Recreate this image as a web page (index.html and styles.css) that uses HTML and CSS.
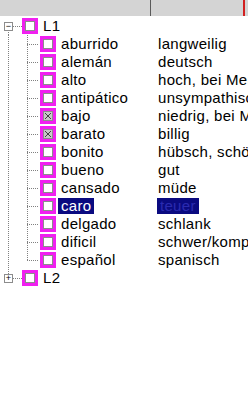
FILE: index.html
```html
<!DOCTYPE html>
<html lang="en">
<head>
    <meta charset="UTF-8">
    <title>Vokabeln</title>
    <link rel="stylesheet" href="styles.css">
</head>
<body>
    <div class="header">
        <div class="head-cell first"></div>
        <div class="head-cell second"></div>
    </div>
    <div class="tree">
        <div class="row">
            <div class="col1">
                <span class="guide root top"><span class="exp">&minus;</span></span>
                <span class="cb"></span>
                <span class="lbl">L1</span>
            </div>
        </div>

        <div class="row">
            <div class="col1"><span class="guide line"></span><span class="guide child"></span><span class="cb"></span><span class="lbl">aburrido</span></div>
            <div class="col2">langweilig</div>
        </div>
        <div class="row">
            <div class="col1"><span class="guide line"></span><span class="guide child"></span><span class="cb"></span><span class="lbl">alemán</span></div>
            <div class="col2">deutsch</div>
        </div>
        <div class="row">
            <div class="col1"><span class="guide line"></span><span class="guide child"></span><span class="cb"></span><span class="lbl">alto</span></div>
            <div class="col2">hoch, bei Menschen: groß</div>
        </div>
        <div class="row">
            <div class="col1"><span class="guide line"></span><span class="guide child"></span><span class="cb"></span><span class="lbl">antipático</span></div>
            <div class="col2">unsympathisch</div>
        </div>
        <div class="row">
            <div class="col1"><span class="guide line"></span><span class="guide child"></span><span class="cb checked"></span><span class="lbl">bajo</span></div>
            <div class="col2">niedrig, bei Menschen: klein</div>
        </div>
        <div class="row">
            <div class="col1"><span class="guide line"></span><span class="guide child"></span><span class="cb checked"></span><span class="lbl">barato</span></div>
            <div class="col2">billig</div>
        </div>
        <div class="row">
            <div class="col1"><span class="guide line"></span><span class="guide child"></span><span class="cb"></span><span class="lbl">bonito</span></div>
            <div class="col2">hübsch, schön</div>
        </div>
        <div class="row">
            <div class="col1"><span class="guide line"></span><span class="guide child"></span><span class="cb"></span><span class="lbl">bueno</span></div>
            <div class="col2">gut</div>
        </div>
        <div class="row">
            <div class="col1"><span class="guide line"></span><span class="guide child"></span><span class="cb"></span><span class="lbl">cansado</span></div>
            <div class="col2">müde</div>
        </div>
        <div class="row selected">
            <div class="col1"><span class="guide line"></span><span class="guide child"></span><span class="cb"></span><span class="lbl sel">caro</span></div>
            <div class="col2"><span class="sel2">teuer</span></div>
        </div>
        <div class="row">
            <div class="col1"><span class="guide line"></span><span class="guide child"></span><span class="cb"></span><span class="lbl">delgado</span></div>
            <div class="col2">schlank</div>
        </div>
        <div class="row">
            <div class="col1"><span class="guide line"></span><span class="guide child"></span><span class="cb"></span><span class="lbl">dificil</span></div>
            <div class="col2">schwer/kompliziert</div>
        </div>
        <div class="row">
            <div class="col1"><span class="guide line"></span><span class="guide child last"></span><span class="cb"></span><span class="lbl">español</span></div>
            <div class="col2">spanisch</div>
        </div>

        <div class="row">
            <div class="col1">
                <span class="guide root bottom"><span class="exp">+</span></span>
                <span class="cb"></span>
                <span class="lbl">L2</span>
            </div>
        </div>
    </div>
</body>
</html>
```
FILE: styles.css
```css
body {
    margin: 0;
    width: 248px;
    height: 406px;
    overflow: hidden;
    background: white;
    font-family: "Liberation Sans", Arial, sans-serif;
    font-size: 15px;
    letter-spacing: 0.3px;
    color: #000;
}

/* column header */
.header {
    display: flex;
    height: 16px;
    background: #d4d4d4;
}
.head-cell.first {
    width: 150px;
    border-right: 1px solid #5a5a5a;
}
.head-cell.second {
    width: 92px;
    border-right: 2px solid #d22020;
}

.tree {
    padding-top: 1px;
}
.row {
    display: flex;
    height: 18px;
    line-height: 18px;
    white-space: nowrap;
}
.col1 {
    width: 151px;
    flex-shrink: 0;
    display: flex;
    align-items: center;
}
.col2 {
    padding-left: 7px;
    overflow: hidden;
}

/* tree guide lines, drawn as dotted gradients */
.guide {
    height: 18px;
    flex-shrink: 0;
    display: flex;
    align-items: center;
    background-repeat: no-repeat;
}
.guide.line {
    width: 19px;
    background-image: repeating-linear-gradient(#808080 0 1px, transparent 1px 2px);
    background-size: 1px 100%;
    background-position: 8px 0;
}
.guide.child {
    width: 21px;
    background-image:
        repeating-linear-gradient(#808080 0 1px, transparent 1px 2px),
        repeating-linear-gradient(90deg, #808080 0 1px, transparent 1px 2px);
    background-size: 1px 100%, 12px 1px;
    background-position: 8px 0, 8px 9px;
}
.guide.child.last {
    background-size: 1px 9px, 12px 1px;
}
.guide.root {
    width: 22px;
    background-image:
        repeating-linear-gradient(#808080 0 1px, transparent 1px 2px),
        repeating-linear-gradient(90deg, #808080 0 1px, transparent 1px 2px);
    background-size: 1px 9px, 9px 1px;
    background-position: 8px 9px, 13px 9px;
}
.guide.root.bottom {
    background-position: 8px 0, 13px 9px;
}

.exp {
    width: 9px;
    height: 9px;
    box-sizing: border-box;
    margin-left: 4px;
    border: 1px solid #8c8c8c;
    background: white;
    font-size: 9px;
    letter-spacing: 0;
    line-height: 7px;
    text-align: center;
    color: #000;
}

/* check boxes with the magenta focus frame */
.cb {
    width: 16px;
    height: 16px;
    box-sizing: border-box;
    flex-shrink: 0;
    border: 3px solid #f020f0;
    background: white;
    box-shadow: inset 0 0 0 1px #8c8c8c;
    margin-right: 5px;
}
.cb.checked {
    background:
        linear-gradient(45deg, transparent 42%, #404040 42% 58%, transparent 58%) 2px 2px / 6px 6px no-repeat,
        linear-gradient(-45deg, transparent 42%, #404040 42% 58%, transparent 58%) 2px 2px / 6px 6px no-repeat,
        #c8c8c8;
}

.lbl.sel {
    background: #0a0a80;
    color: white;
    line-height: 16px;
    padding: 0 3px;
    margin-left: -3px;
}
.sel2 {
    display: inline-block;
    background: #0a0a80;
    color: #2a2ab0;
    line-height: 16px;
    padding: 0 3px;
    margin-left: -1px;
}
```
